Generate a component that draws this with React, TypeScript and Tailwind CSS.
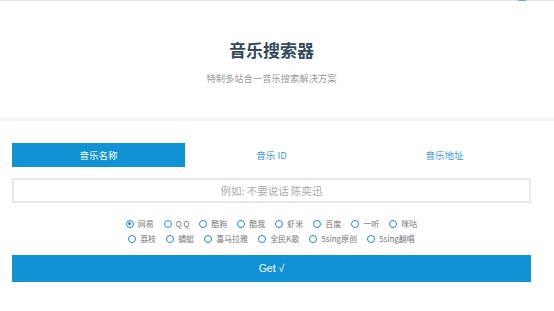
const font = { fontFamily: '"Noto Sans CJK SC", "Noto Sans", sans-serif' };

const row1 = ['网易', 'Q Q', '酷狗', '酷我', '虾米', '百度', '一听', '咪咕'];
const row2 = ['荔枝', '蜻蜓', '喜马拉雅', '全民K歌', '5sing原创', '5sing翻唱'];

function Radio({ label, checked }: { label: string; checked?: boolean }) {
  return (
    <label className="flex items-center mr-[10px]">
      <span className="w-[8px] h-[8px] rounded-full border-[1.5px] border-[#1f8ad2] flex items-center justify-center">
        {checked && <span className="w-[3px] h-[3px] rounded-full bg-[#1f8ad2]" />}
      </span>
      <span className="ml-[4px] text-[8px] text-[#777]">{label}</span>
    </label>
  );
}

export default function App() {
  const tabs = ['音乐名称', '音乐 ID', '音乐地址'];
  return (
    <div className="w-[554px] h-[311px] bg-white overflow-hidden" style={font}>
      <div className="h-[1px] bg-[#e6e6e6] flex">
        <div className="ml-[518px] w-[8px] h-full bg-[#5bb5ea]" />
      </div>
      <header className="h-[117px] flex flex-col items-center pt-[40px] pr-[11px]">
        <h1 className="text-[17px] leading-[18px] font-bold text-[#34495e]">音乐搜索器</h1>
        <p className="mt-[14px] text-[9.3px] leading-[10px] text-[#999]">特制多站合一音乐搜索解决方案</p>
      </header>
      <div className="h-[3px] bg-[#f5f5f5]" />
      <main className="ml-[12px] w-[519px] pt-[22px]">
        <div className="flex h-[24px]">
          {tabs.map((t, i) => (
            <div
              key={t}
              className={
                i === 0
                  ? 'flex-1 flex items-center justify-center text-[9.5px] bg-[#1192d4] text-white'
                  : 'flex-1 flex items-center justify-center text-[9.5px] text-[#3a9be0]'
              }
            >
              {t}
            </div>
          ))}
        </div>
        <div className="mt-[11px] h-[25px] border-2 border-[#e8e8e8] flex items-center justify-center text-[10.5px] text-[#aaa]">
          例如: 不要说话 陈奕迅
        </div>
        <div className="mt-[13px] pl-[10px]">
          <div className="flex justify-center h-[15px] items-center">
            {row1.map((r, i) => (
              <Radio key={r} label={r} checked={i === 0} />
            ))}
          </div>
          <div className="flex justify-center h-[15px] items-center">
            {row2.map((r) => (
              <Radio key={r} label={r} />
            ))}
          </div>
        </div>
        <button className="mt-[9px] w-full h-[27px] bg-[#1192d4] text-white text-[10.5px] flex items-center justify-center font-['Liberation_Sans',sans-serif]">
          Get √
        </button>
      </main>
    </div>
  );
}
